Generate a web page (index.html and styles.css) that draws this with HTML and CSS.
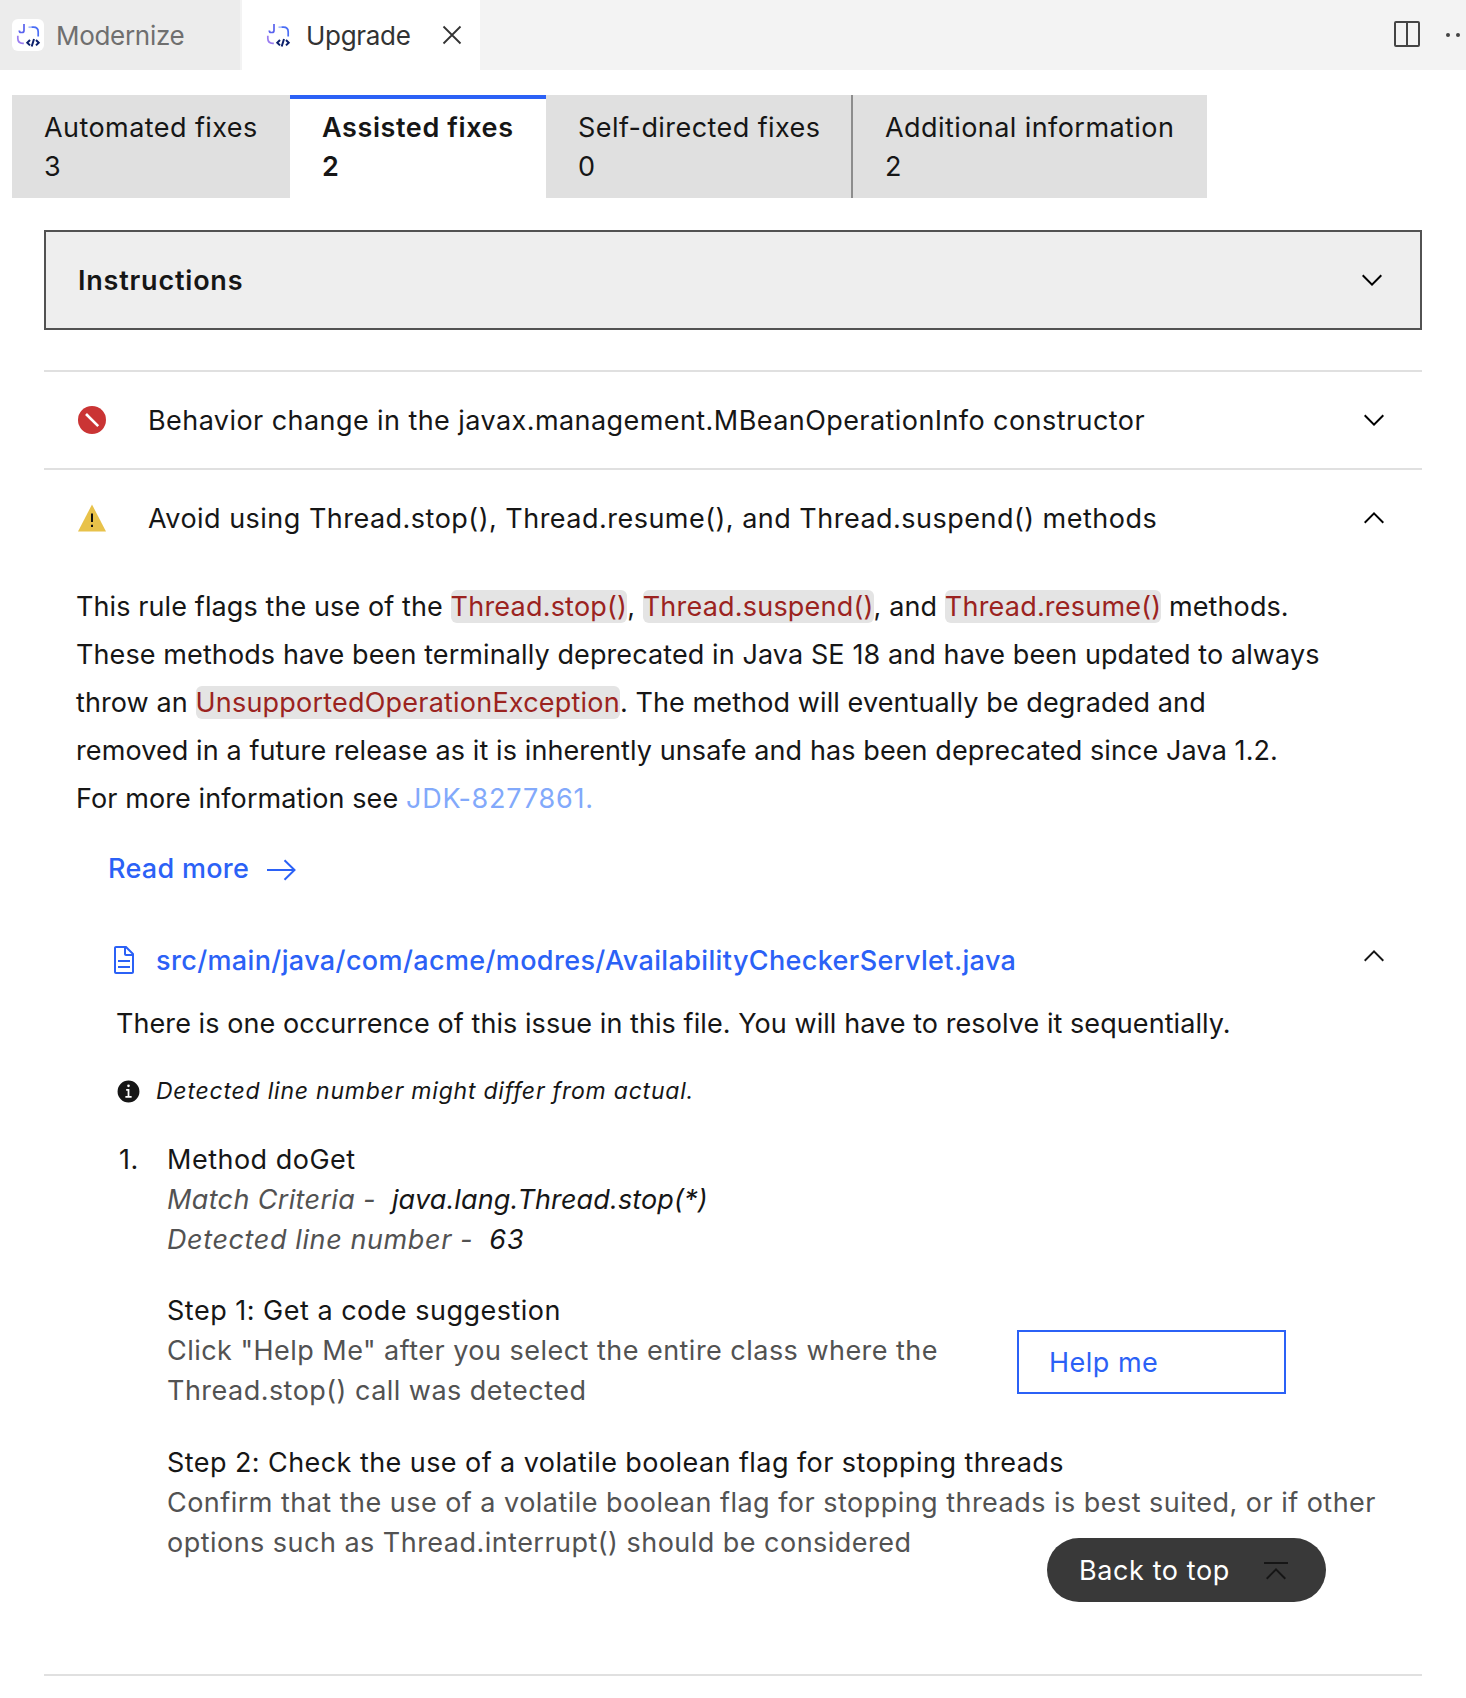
FILE: index.html
```html
<!DOCTYPE html>
<html lang="en">
<head>
<meta charset="utf-8">
<title>Upgrade</title>
<link rel="stylesheet" href="styles.css">
</head>
<body>
<svg class="defs" width="0" height="0" aria-hidden="true">
  <defs>
    <symbol id="logo" viewBox="0 0 32 32">
      <g fill="none" stroke-width="1.7">
        <path stroke="#5a63ee" d="M12 5v6.500q0 2-2 2H9q-1.700 0-1.700-2"/>
        <path stroke="#a9bdfb" d="M16.500 8.200h3"/>
        <path stroke="#4a6df5" d="M19.500 8.200h2q4.700 0 4.700 4.700v4.600"/>
        <path stroke="#9a7cf0" d="M5.800 16.800v2.500q0 5 5 5h1"/>
        <path stroke="#0b1f6b" stroke-width="2" d="M18 21l-2.700 2.700 2.700 2.700M24 21l2.700 2.700-2.700 2.700M22 20l-2.300 7.500"/>
      </g>
    </symbol>
    <symbol id="down" viewBox="0 0 32 32"><path d="M16 22L6 12l1.400-1.400 8.600 8.600 8.600-8.600L26 12z"/></symbol>
    <symbol id="up" viewBox="0 0 32 32"><path d="M16 10l10 10-1.400 1.400L16 12.800l-8.600 8.600L6 20z"/></symbol>
  </defs>
</svg>

<header class="editor-bar">
  <div class="editor-tab"><span class="logo-tile"><svg width="32" height="32"><use href="#logo"/></svg></span><span class="tab-name">Modernize</span></div>
  <div class="editor-tab active"><svg width="32" height="32"><use href="#logo"/></svg><span class="tab-name">Upgrade</span>
    <svg class="close" width="20" height="20" viewBox="0 0 20 20"><path d="M1.500 1.500l17 17M18.500 1.500l-17 17"/></svg>
  </div>
  <div class="editor-actions">
    <svg width="26" height="26" viewBox="0 0 26 26"><path d="M1 2q0-1 1-1h22q1 0 1 1v22q0 1-1 1H2q-1 0-1-1zM13 1v24" fill="none" stroke="#444" stroke-width="2"/></svg>
    <svg class="dots" width="26" height="6" viewBox="0 0 26 6" fill="#444"><circle cx="3" cy="3" r="2"/><circle cx="13" cy="3" r="2"/><circle cx="23" cy="3" r="2"/></svg>
  </div>
</header>

<nav class="tabs">
  <div class="tab tab-auto"><span>Automated fixes</span><span>3</span></div>
  <div class="tab tab-assist selected"><span>Assisted fixes</span><span>2</span></div>
  <div class="tab tab-self"><span>Self-directed fixes</span><span>0</span></div>
  <div class="tab tab-info"><span>Additional information</span><span>2</span></div>
</nav>

<main>
  <section class="instructions"><h2>Instructions</h2><svg width="32" height="32"><use href="#down"/></svg></section>

  <section class="issues">
    <div class="issue-head">
      <svg width="28" height="28" viewBox="0 0 28 28"><circle cx="14" cy="14" r="14" fill="#ca3434"/><path d="M8 8l12.200 12.200" stroke="#fff" stroke-width="2.600"/></svg>
      <span>Behavior change in the javax.management.MBeanOperationInfo constructor</span>
      <svg class="chev" width="32" height="32"><use href="#down"/></svg>
    </div>
    <div class="issue-head open">
      <svg width="28" height="28" viewBox="0 0 28 28"><path d="M14 .500L28 27.500H0z" fill="#e8c24a"/><path d="M13 9.500h2v8.500h-2zM13 20.800h2v2.200h-2z" fill="#111"/></svg>
      <span>Avoid using Thread.stop(), Thread.resume(), and Thread.suspend() methods</span>
      <svg class="chev" width="32" height="32"><use href="#up"/></svg>
    </div>

    <p class="description">This rule flags the use of the <code>Thread.stop()</code>, <code>Thread.suspend()</code>, and <code>Thread.resume()</code> methods.<br>These methods have been terminally deprecated in Java SE 18 and have been updated to always<br>throw an <code>UnsupportedOperationException</code>. The method will eventually be degraded and<br>removed in a future release as it is inherently unsafe and has been deprecated since Java 1.2.<br>For more information see <a class="jdk">JDK-8277861.</a></p>

    <a class="read-more"><span>Read more</span><svg width="30" height="22" viewBox="0 0 30 22"><path d="M0 11h28M17.500 1.300l10 9.700-10 9.700" fill="none" stroke="#2b61f6" stroke-width="2"/></svg></a>

    <div class="file-row">
      <svg width="32" height="32" viewBox="0 0 32 32" fill="#2b61f6" fill-rule="evenodd"><path d="M25.700 9.300l-7-7C18.500 2.100 18.300 2 18 2H8C6.900 2 6 2.900 6 4v24c0 1.100.9 2 2 2h16c1.100 0 2-.9 2-2V10c0-.3-.1-.5-.3-.7zM18 4.400l5.600 5.600H18V4.400zM24 28H8V4h8v6c0 1.100.9 2 2 2h6v16z"/><path d="M10 22h12v2H10zM10 16h12v2H10z"/></svg>
      <a>src/main/java/com/acme/modres/AvailabilityCheckerServlet.java</a>
      <svg class="chev" width="32" height="32" fill="#161616"><use href="#up"/></svg>
    </div>
    <p class="occurrence">There is one occurrence of this issue in this file. You will have to resolve it sequentially.</p>
    <div class="notice">
      <svg width="25" height="25" viewBox="0 0 32 32"><path fill="#161616" fill-rule="evenodd" d="M16 2a14 14 0 1 0 14 14A14 14 0 0 0 16 2zm0 5a1.700 1.700 0 1 1-1.700 1.700A1.700 1.700 0 0 1 16 7zm4 17.120H12V21.880h2.880V15.120H13V12.880h4.130v9H20z"/></svg>
      <em>Detected line number might differ from actual.</em>
    </div>

    <ol class="occurrences">
      <li>
        <span class="num">1.</span>
        <div class="detail">
          <p class="method">Method doGet</p>
          <p class="meta criteria"><span>Match Criteria -</span><b>java.lang.Thread.stop(*)</b></p>
          <p class="meta line-no"><span>Detected line number -</span><b>63</b></p>
          <div class="step step-one">
            <div><p class="step-title">Step 1: Get a code suggestion</p>
            <p class="hint">Click "Help Me" after you select the entire class where the<br>Thread.stop() call was detected</p></div>
            <button class="help">Help me</button>
          </div>
          <div class="step step-two">
            <p class="step-title">Step 2: Check the use of a volatile boolean flag for stopping threads</p>
            <p class="hint">Confirm that the use of a volatile boolean flag for stopping threads is best suited, or if other<br>options such as Thread.interrupt() should be considered</p>
          </div>
        </div>
      </li>
    </ol>
  </section>
</main>
<button class="to-top"><span>Back to top</span><svg width="32" height="32" viewBox="0 0 32 32"><path fill="#161616" d="M16 14L6 24l1.400 1.400 8.600-8.600 8.600 8.600L26 24zM4 8h24v2H4z"/></svg></button>
</body>
</html>
```

FILE: styles.css
```css
* { box-sizing: border-box; margin: 0; padding: 0; }
body {
  width: 1466px;
  height: 1698px;
  overflow: hidden;
  position: relative;
  background: #fff;
  color: #161616;
  font: 400 27px/40px Inter, "Liberation Sans", sans-serif;
  white-space: nowrap;
}
svg { display: block; flex: none; }
.defs { position: absolute; }

.editor-bar { display: flex; height: 70px; background: #f3f3f3; overflow: hidden; }
.editor-tab { display: flex; align-items: center; width: 240px; margin-right: 2px; padding: 0 0 0 12px; background: #ececec; color: #6f6f6f; font-size: 26px; letter-spacing: -0.3px; }
.editor-tab.active { width: 238px; margin: 0; padding-left: 20px; background: #fff; color: #333; }
.logo-tile { border-radius: 6px; background: #fff; }
.tab-name { margin-left: 12px; padding-top: 2px; }
.close { margin: 0 18px 0 auto; fill: none; stroke: #333; stroke-width: 1.8; }
.editor-actions { display: flex; align-items: center; gap: 25px; margin-left: auto; margin-right: -5px; padding-bottom: 2px; }
.dots { margin-top: 2px; }

.tabs { display: flex; height: 103px; margin: 25px 0 0 12px; letter-spacing: 0.43px; }
.tab { display: flex; flex-direction: column; padding: 13px 0 0 32px; background: #e0e0e0; line-height: 39px; }
.tab-auto { width: 278px; }
.tab-assist { width: 256px; }
.tab-self { width: 305px; }
.tab-info { width: 356px; border-left: 2px solid #8d8d8d; }
.selected { padding-top: 9px; border-top: 4px solid #2b61f6; background: #fff; font-weight: 600; letter-spacing: 0.6px; }

main { margin: 32px 44px 0; }
.instructions { display: flex; align-items: center; justify-content: space-between; height: 100px; padding: 0 32px; border: 2px solid #525252; background: #eee; }
h2 { padding-top: 2px; font-size: 27px; font-weight: 600; letter-spacing: 0.8px; }

.issues { height: 1306px; margin-top: 40px; border-top: 2px solid #e0e0e0; border-bottom: 2px solid #e0e0e0; }
.issue-head { display: flex; align-items: center; height: 98px; padding: 0 32px 0 34px; border-bottom: 2px solid #e0e0e0; }
.issue-head.open { border: 0; padding-bottom: 2px; }
.issue-head span { margin-left: 42px; padding-top: 1px; letter-spacing: 0.43px; }
.issue-head.open span { letter-spacing: 0.48px; }
.chev { margin-left: auto; }

.description { margin: 15px 0 0 32px; line-height: 48px; letter-spacing: 0.1px; }
code { border-radius: 6px; background: #e4e4e4; color: #9b2320; font: inherit; letter-spacing: 0.21px; }
.jdk { color: #82a9fb; letter-spacing: 0.78px; }
.read-more { display: flex; align-items: center; gap: 18px; height: 40px; margin: 26px 0 0 64px; color: #2b61f6; font-weight: 500; letter-spacing: 0.3px; }
.read-more svg { margin-top: 2px; }
.file-row { display: flex; align-items: center; gap: 16px; height: 40px; margin: 51px 32px 0 64px; color: #2b61f6; font-weight: 500; letter-spacing: 0.37px; }
.file-row a { padding-top: 1px; }
.file-row .chev { margin-bottom: 8px; }
.occurrence { margin: 24px 0 0 72px; letter-spacing: 0.07px; }
.notice { display: flex; align-items: center; gap: 15px; height: 40px; margin: 27px 0 0 72px; font-size: 23px; letter-spacing: 0.78px; }

.occurrences { margin-top: 29px; list-style: none; }
.occurrences li { display: flex; padding-left: 75px; letter-spacing: 0.5px; }
.num { width: 48px; }
.meta { color: #525252; font-style: italic; }
.meta b { margin-left: 16px; color: #161616; font-weight: 400; }
.criteria { letter-spacing: 0.35px; }
.criteria b { letter-spacing: 0.13px; }
.line-no { letter-spacing: 0.6px; }
.line-no b { letter-spacing: 1px; }
.step { margin-top: 31px; }
.step-two { margin-top: 32px; }
.step-two .step-title { letter-spacing: 0.43px; }
.step-one { display: flex; }
.step-one > div { width: 850px; }
.hint { color: #525252; letter-spacing: 0.47px; }
button { display: flex; align-items: center; font: inherit; }
.help { width: 269px; height: 64px; margin-top: 39px; padding: 2px 0 0 30px; border: 2px solid #2b61f6; background: #fff; color: #2b61f6; letter-spacing: 0.5px; }
.to-top { position: absolute; left: 1047px; top: 1538px; width: 279px; height: 64px; justify-content: space-between; padding: 0 34px 0 32px; border: 0; border-radius: 32px; background: #393939; color: #fff; letter-spacing: 0.6px; }
.to-top span { padding-top: 2px; }
```
